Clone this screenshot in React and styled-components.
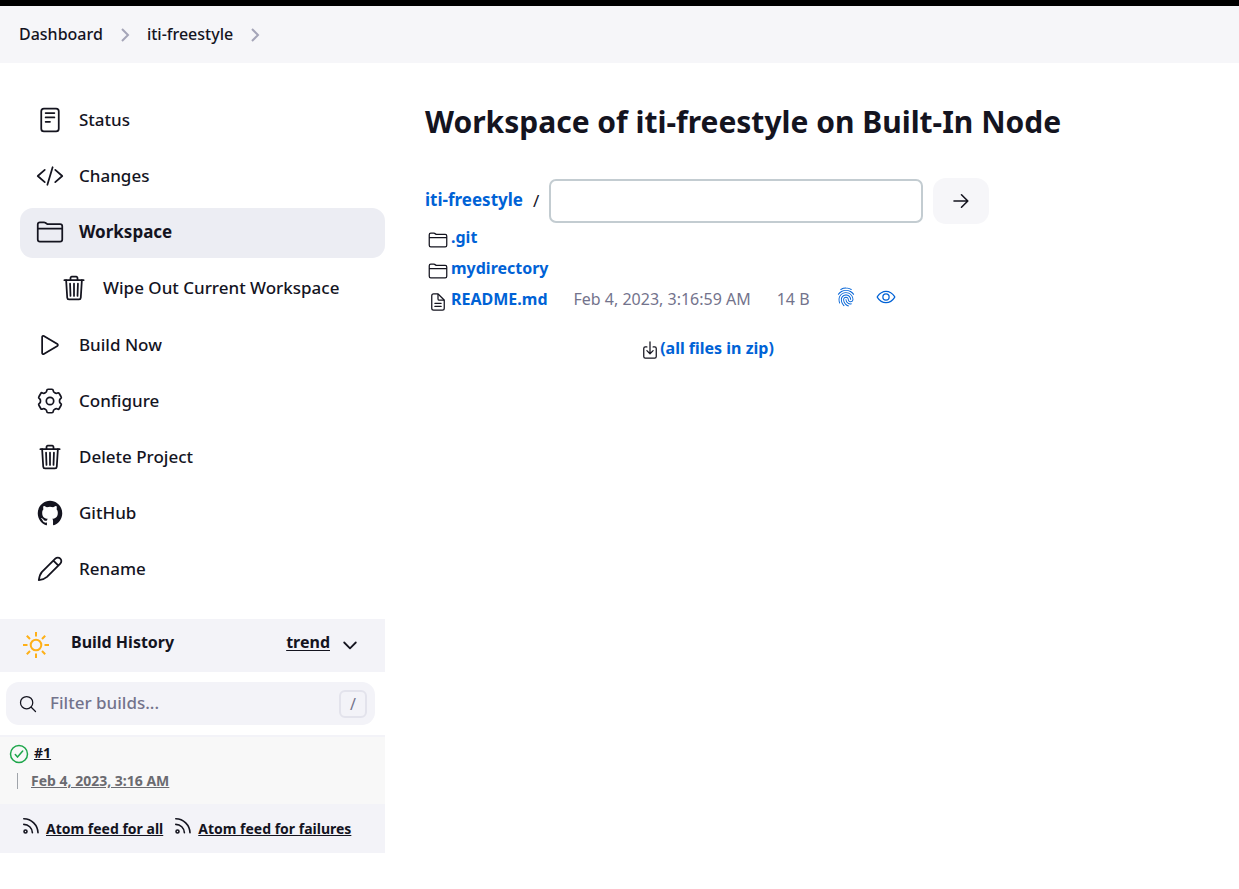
import React from "react";
import styled, { createGlobalStyle, css } from "styled-components";
import {
  IoReaderOutline,
  IoCodeSlashOutline,
  IoFolderOutline,
  IoTrashOutline,
  IoPlayOutline,
  IoLogoGithub,
  IoSearchOutline,
  IoFingerPrintOutline,
  IoEyeOutline,
  IoDocumentTextOutline,
  IoDownloadOutline,
} from "react-icons/io5";

const ink = "#14141f";
const link = "#0062d6";
const muted = "#73738c";
const panel = "#f3f3f8";

const GlobalStyle = createGlobalStyle`
  *, *::before, *::after { box-sizing: border-box; }
  body {
    margin: 0;
    background: #fff;
    color: ${ink};
    font-family: "Noto Sans", "Open Sans", sans-serif;
    font-size: 16px;
    line-height: 24px;
  }
  a { color: inherit; }
  svg { display: block; flex: none; }
`;

const TopBar = styled.header`
  height: 6px;
  background: #000;
`;

const Breadcrumbs = styled.nav`
  display: flex;
  align-items: center;
  gap: 16px;
  height: 57px;
  padding: 0 19px;
  background: #f6f6f9;
  font-weight: 500;
  a {
    padding-bottom: 2px;
    text-decoration: none;
  }
`;

const Layout = styled.div`
  display: flex;
  align-items: flex-start;
`;

const Sidebar = styled.aside`
  flex: none;
  width: 385px;
  padding-top: 33px;
`;

const Tasks = styled.nav`
  display: flex;
  flex-direction: column;
  gap: 6px;
  padding: 0 0 24px 20px;
`;

const Task = styled.a`
  display: flex;
  align-items: center;
  gap: 15px;
  height: 50px;
  padding: 0 16px;
  border-radius: 13px;
  font-size: 17px;
  font-weight: 500;
  text-decoration: none;
  ${(p) => p.$nested && css`
    margin-bottom: 1px;
    padding-left: 40px;
  `}
  ${(p) => p.$active && css`
    background: #ecedf3;
    font-weight: 700;
  `}
  svg { margin-bottom: 2px; }
  span { padding-bottom: 2px; }
`;

const HistoryHeader = styled.div`
  display: flex;
  align-items: center;
  height: 53px;
  padding: 0 27px 2px 22px;
  background: ${panel};
  font-weight: 700;
  h2 {
    flex: 1;
    margin: 0 0 6px 21px;
    font-size: 16px;
    line-height: 24px;
  }
  a {
    margin: 0 12px 6px 0;
    text-underline-offset: 2px;
  }
`;

const IconButton = styled.button`
  display: flex;
  padding: 0;
  border: 0;
  background: none;
  color: inherit;
`;

const Filter = styled.label`
  display: flex;
  align-items: center;
  gap: 12px;
  height: 43px;
  margin: 10px 10px 10px 6px;
  padding: 0 8px 0 12px;
  border-radius: 13px;
  background: ${panel};
  input {
    flex: 1;
    min-width: 0;
    padding: 0 0 2px;
    border: 0;
    outline: 0;
    background: none;
    font: inherit;
    font-size: 17px;
    font-weight: 500;
    color: ${ink};
  }
  input::placeholder { color: ${muted}; opacity: 1; }
  kbd {
    width: 28px;
    height: 28px;
    border: 2px solid #e3e3ec;
    border-radius: 6px;
    color: ${muted};
    font: inherit;
    line-height: 24px;
    text-align: center;
  }
`;

const Build = styled.div`
  height: 69px;
  padding: 4px 9px;
  border-top: 2px solid ${panel};
  background: #f8f8f8;
  font-weight: 700;
  font-size: 14px;
`;

const BuildNumber = styled.div`
  display: flex;
  align-items: center;
  gap: 5px;
  a { padding-bottom: 2px; }
`;

const BuildDate = styled.div`
  margin: 6px 0 0 8px;
  padding-left: 13px;
  border-left: 1px solid #a0a4aa;
  color: #6b6b70;
  line-height: 16px;
`;

const Feeds = styled.div`
  display: flex;
  gap: 11px;
  height: 49px;
  padding: 13px 22px;
  background: ${panel};
  font-size: 14px;
  font-weight: 700;
  a {
    display: flex;
    gap: 6px;
    white-space: nowrap;
  }
`;

const Main = styled.main`
  flex: 1;
  min-width: 0;
  padding: 37px 40px;
`;

const Title = styled.h1`
  margin: 0 0 35px;
  font-size: 30px;
  line-height: 43px;
  font-weight: 700;
`;

const Files = styled.section`
  max-width: 564px;
`;

const PathForm = styled.form`
  display: flex;
  align-items: center;
  gap: 10px;
  font-size: 17px;
  a {
    padding-bottom: 2px;
    color: ${link};
    font-weight: 700;
    text-decoration: none;
    white-space: nowrap;
  }
  input {
    flex: 1;
    min-width: 0;
    height: 44px;
    padding: 0 12px;
    border: 2px solid #c3ccd1;
    border-radius: 7px;
    background: #fff;
    font: inherit;
  }
  button {
    display: flex;
    align-items: center;
    justify-content: center;
    width: 56px;
    height: 46px;
    border: 0;
    border-radius: 13px;
    background: #f6f6f9;
    color: ${ink};
  }
`;

const FileTable = styled.table`
  border-collapse: collapse;
`;

const Cell = styled.td`
  height: 31px;
  padding: 0 26px 5px 0;
  color: ${muted};
  white-space: nowrap;
`;

const IconCell = styled(Cell)`
  width: 26px;
  padding: 0 0 0 3px;
  color: ${ink};
`;

const ActionCell = styled(Cell)`
  padding: 0 20px 9px 0;
`;

const FileLink = styled.a`
  color: ${link};
  font-weight: 700;
  text-decoration: none;
`;

const ZipRow = styled.div`
  display: flex;
  justify-content: center;
  padding-top: 19px;
  svg { margin-top: 4px; }
`;

const Chevron = () => (
  <svg width="12" height="14" viewBox="0 0 12 14" fill="none" stroke="#a5a5b8" strokeWidth="2">
    <path d="M3 1 9 7l-6 6" />
  </svg>
);

// Six teeth, each with two rounded outer corners, and a shallow curved notch between them.
const gearPath = (() => {
  const point = (degrees, radius) => {
    const angle = (degrees * Math.PI) / 180;
    return `${(14 + radius * Math.sin(angle)).toFixed(2)} ${(14 - radius * Math.cos(angle)).toFixed(2)}`;
  };
  let d = `M${point(-9, 11.9)}`;
  for (let tooth = 0; tooth < 6; tooth += 1) {
    const t = tooth * 60;
    d += `L${point(t + 9, 11.9)}Q${point(t + 15, 12.2)} ${point(t + 17, 11)}`;
    d += `Q${point(t + 20, 9.5)} ${point(t + 30, 9.5)}Q${point(t + 40, 9.5)} ${point(t + 43, 11)}`;
    d += `Q${point(t + 45, 12.2)} ${point(t + 51, 11.9)}`;
  }
  return `${d}Z`;
})();

const GearIcon = () => (
  <svg width="28" height="28" viewBox="0 0 28 28" fill="none" stroke="currentColor" strokeWidth="1.7" strokeLinejoin="round">
    <circle cx="14" cy="14" r="3.7" />
    <path d={gearPath} />
  </svg>
);

const PencilIcon = () => (
  <svg width="28" height="28" viewBox="0 0 28 28" fill="none" stroke="currentColor" strokeWidth="1.8" strokeLinecap="round" strokeLinejoin="round">
    <path d="M2.8 25.2c.5-3.4 1.3-6.200 3.200-8.300L19.300 3.600a3.500 3.500 0 0 1 5 5L11 21.900c-2.100 1.900-4.900 2.800-8.200 3.300ZM17.400 5.600l5 5" />
  </svg>
);

const SunIcon = () => (
  <svg width="28" height="28" viewBox="0 0 28 28" fill="none" stroke="#feb018" strokeWidth="2">
    <circle cx="14" cy="14" r="5.300" />
    <path d="M14 1v4.500M14 22.500V27M1 14h4.500M22.500 14H27M4.800 4.800 8 8M20 20l3.200 3.200M23.200 4.800 20 8M8 20l-3.200 3.200" />
  </svg>
);

const DownIcon = () => (
  <svg width="16" height="16" viewBox="0 0 16 16" fill="none" stroke="currentColor" strokeWidth="1.8" strokeLinecap="round" strokeLinejoin="round">
    <path d="m2.200 5.500 5.800 5.800 5.800-5.800" />
  </svg>
);

const SuccessIcon = () => (
  <svg width="20" height="20" viewBox="0 0 20 20" fill="none" stroke="#1ea64b" strokeWidth="1.500" strokeLinecap="round" strokeLinejoin="round">
    <circle cx="10" cy="10" r="8.500" />
    <path d="m6.300 10.600 2.200 2.500 5.200-6" />
  </svg>
);

const FeedIcon = () => (
  <svg width="18" height="18" viewBox="0 0 18 18" fill="none" stroke="currentColor" strokeWidth="1.600" strokeLinecap="round">
    <circle cx="3.500" cy="14.500" r="1.500" />
    <path d="M1.800 7.400c4.600 0 8.400 3.600 8.600 8.400M1.800 1.800c7.700 0 13.900 6.200 14.200 14" />
  </svg>
);

const ArrowIcon = () => (
  <svg width="18" height="18" viewBox="0 0 18 18" fill="none" stroke="currentColor" strokeWidth="1.600" strokeLinecap="round" strokeLinejoin="round">
    <path d="M2 9h13.500M9.500 2.800 15.800 9l-6.300 6.200" />
  </svg>
);

const tasks = [
  { label: "Status", Icon: IoReaderOutline },
  { label: "Changes", Icon: IoCodeSlashOutline },
  { label: "Workspace", Icon: IoFolderOutline, active: true },
  { label: "Wipe Out Current Workspace", Icon: IoTrashOutline, nested: true },
  { label: "Build Now", Icon: IoPlayOutline },
  { label: "Configure", Icon: GearIcon },
  { label: "Delete Project", Icon: IoTrashOutline },
  { label: "GitHub", Icon: IoLogoGithub },
  { label: "Rename", Icon: PencilIcon },
];

export default function App() {
  return (
    <>
      <GlobalStyle />
      <TopBar />
      <Breadcrumbs aria-label="Breadcrumbs">
        <a href="#dashboard">Dashboard</a>
        <Chevron />
        <a href="#project">iti-freestyle</a>
        <Chevron />
      </Breadcrumbs>
      <Layout>
        <Sidebar>
          <Tasks aria-label="Project">
            {tasks.map(({ label, Icon, active, nested }) => (
              <Task key={label} href="#task" $active={active} $nested={nested}>
                <Icon size={28} />
                <span>{label}</span>
              </Task>
            ))}
          </Tasks>
          <HistoryHeader>
            <SunIcon />
            <h2>Build History</h2>
            <a href="#trend">trend</a>
            <IconButton type="button" aria-label="Collapse">
              <DownIcon />
            </IconButton>
          </HistoryHeader>
          <Filter>
            <IoSearchOutline size={20} />
            <input type="text" placeholder="Filter builds..." aria-label="Filter builds" />
            <kbd>/</kbd>
          </Filter>
          <Build>
            <BuildNumber>
              <SuccessIcon />
              <a href="#build">#1</a>
            </BuildNumber>
            <BuildDate>
              <a href="#build">Feb 4, 2023, 3:16 AM</a>
            </BuildDate>
          </Build>
          <Feeds>
            <a href="#all"><FeedIcon />Atom feed for all</a>
            <a href="#failures"><FeedIcon />Atom feed for failures</a>
          </Feeds>
        </Sidebar>
        <Main>
          <Title>Workspace of iti-freestyle on Built-In Node</Title>
          <Files>
            <PathForm>
              <a href="#root">iti-freestyle</a>
              <span>/</span>
              <input type="text" aria-label="Path" />
              <button type="button" aria-label="Go"><ArrowIcon /></button>
            </PathForm>
            <FileTable>
              <tbody>
                <tr>
                  <IconCell><IoFolderOutline size={20} /></IconCell>
                  <Cell colSpan={5}><FileLink href="#git">.git</FileLink></Cell>
                </tr>
                <tr>
                  <IconCell><IoFolderOutline size={20} /></IconCell>
                  <Cell colSpan={5}><FileLink href="#mydirectory">mydirectory</FileLink></Cell>
                </tr>
                <tr>
                  <IconCell><IoDocumentTextOutline size={20} /></IconCell>
                  <Cell><FileLink href="#readme">README.md</FileLink></Cell>
                  <Cell>Feb 4, 2023, 3:16:59 AM</Cell>
                  <Cell>14 B</Cell>
                  <ActionCell><FileLink href="#fingerprint" aria-label="Fingerprint"><IoFingerPrintOutline size={20} /></FileLink></ActionCell>
                  <ActionCell><FileLink href="#view" aria-label="View"><IoEyeOutline size={20} /></FileLink></ActionCell>
                </tr>
              </tbody>
            </FileTable>
            <ZipRow>
              <IoDownloadOutline size={20} />
              <FileLink href="#zip">(all files in zip)</FileLink>
            </ZipRow>
          </Files>
        </Main>
      </Layout>
    </>
  );
}
